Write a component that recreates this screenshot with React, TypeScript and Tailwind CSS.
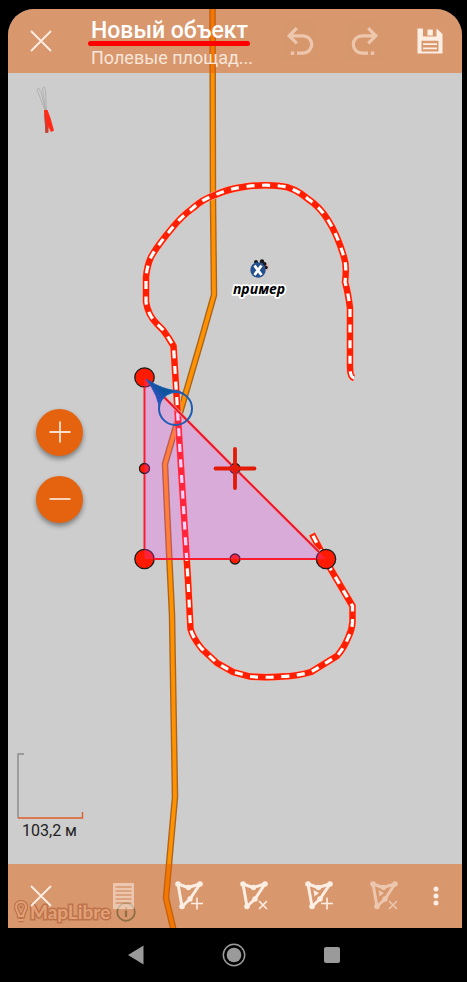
import { ReactNode } from "react";

const road = "212.5,0 213,200 214,295 201,341 165,464 167.5,520 172,615 175,797 166,898 175,936";

const track =
  "M354 378 Q350 377 350 367 L350 308 Q348 292 345 282 Q347 266 344 257 Q337 234 328 220 Q320 207 308 199 Q294 187 280 186 Q262 184 243 187 Q228 189 215 195 Q203 199 193 208 Q182 216 173 227 Q157 246 151 257 Q147 266 146 277 L146 302 Q148 315 157 324 Q164 330 168 337 L173.500 346 L188 580 L190.500 629 Q193 638 202 649 L217 663 L233 672 L250 676.500 Q266 678 282 676.500 Q298 676 311 672 L337 656 Q344 648 348 638 Q352 630 352.500 622 L352.500 606 L330 568 L312 534";

type IconButtonProps = {
  label: string;
  faded?: boolean;
  className?: string;
  children: ReactNode;
};

const IconButton = ({ label, faded, className = "w-[65px]", children }: IconButtonProps) => (
  <button
    aria-label={label}
    className={`flex h-full shrink-0 items-center justify-center text-[#fdeee4] ${className} ${
      faded ? "opacity-55" : ""
    }`}
  >
    {children}
  </button>
);

const CloseIcon = () => (
  <svg width="22" height="22" viewBox="0 0 22 22" stroke="currentColor" strokeWidth="1.8">
    <path d="M1 1L21 21M21 1L1 21" />
  </svg>
);

const UndoIcon = ({ flip }: { flip?: boolean }) => (
  <svg
    width="30"
    height="30"
    viewBox="0 0 30 30"
    fill="none"
    stroke="currentColor"
    strokeWidth="3.2"
    className={flip ? "-scale-x-100" : ""}
  >
    <path d="M11.800 2.200L4.200 9.800L11.800 17.400M4.200 9.800H18A8.700 8.700 0 0 1 18 27.200H12" />
    <path d="M5.800 27.200H9.200" strokeWidth="3.4" />
  </svg>
);

const SaveIcon = () => (
  <svg width="26" height="26" viewBox="0 0 26 26">
    <path
      fill="currentColor"
      fillRule="evenodd"
      d="M.5 .5H6V8.500H19.500V.5L25.500 6V25.500H.5ZM4.500 12.800V23.500H21.500V12.800Z"
    />
    <path fill="currentColor" d="M10.500 1.500H15.800V7.500H10.500ZM6 15.300H20V16.900H6ZM6 19.600H20V21.200H6Z" />
  </svg>
);

const ListIcon = () => (
  <svg width="21" height="26" viewBox="0 0 21 26">
    <path fill="currentColor" d="M0 0H21V26H0Z" />
    <path stroke="#d8976d" strokeWidth="1.4" d="M2.500 4H18.500M2.500 8H18.500M2.500 12H18.500M2.500 16H18.500M2.500 20H18.500" />
  </svg>
);

const NodeIcon = ({ mark, part }: { mark: "plus" | "cross"; part?: boolean }) => (
  <svg width="30" height="30" viewBox="0 0 30 30" fill="none" stroke="currentColor">
    <path d="M4 3L14 6.500L26 3L16 18L8 25.500Z" strokeWidth="3" strokeLinejoin="round" />
    <g fill="currentColor" stroke="none">
      <circle cx="4" cy="3" r="2.8" />
      <circle cx="26" cy="3" r="2.8" />
      <circle cx="8" cy="25.5" r="2.8" />
      <circle cx="14.500" cy="6.500" r="2.700" />
      <circle cx="16" cy="18" r="2.700" />
      {part && <path d="M9.500 9L15 12L10.500 15.500Z" />}
    </g>
    <path
      strokeWidth="1.6"
      d={mark === "plus" ? "M17 22.500H29M23 16.500V28.500" : "M20 20L28 28M28 20L20 28"}
    />
  </svg>
);

const MapCanvas = () => (
  <svg
    className="absolute inset-0 h-full w-full"
    viewBox="8 9 454 919"
    preserveAspectRatio="xMidYMid slice"
    fill="none"
  >
    <defs>
      <linearGradient id="pointer" x1="150" y1="405" x2="172" y2="385" gradientUnits="userSpaceOnUse">
        <stop offset="0.35" stopColor="#2f4fbe" />
        <stop offset="0.65" stopColor="#0c5599" />
      </linearGradient>
    </defs>

    {/* road */}
    <polyline points={road} stroke="#a9641f" strokeWidth="6.5" />
    <polyline points={road} stroke="#ff9200" strokeWidth="3.8" />

    {/* track */}
    <path d={track} stroke="#f5b5a8" strokeWidth="7.4" />
    <path d={track} stroke="#ff1e00" strokeWidth="6.4" />
    <path d={track} stroke="#fff" strokeWidth="3.2" strokeDasharray="8 7.6" />

    {/* edited polygon */}
    <g fill="#ff1a00" stroke="#1c1c1c" strokeWidth="1.3">
      <circle cx="144.500" cy="377.500" r="9.700" />
      <circle cx="144.500" cy="559" r="9.700" />
      <circle cx="326" cy="559" r="9.700" />
      <circle cx="144.500" cy="468.500" r="5" />
      <circle cx="235" cy="559" r="5" />
      <circle cx="235" cy="468.500" r="5" />
    </g>
    <path d="M144.500 377.500V559H326Z" fill="#ff3eff" fillOpacity="0.23" />
    <path d="M144.500 387V463M144.500 474V549M154 559H230M240 559H316" stroke="#fa1c30" strokeWidth="2" />
    <path d="M151 384L231 464.500M239 472.500L319 552" stroke="#f5a79c" strokeWidth="3.2" />
    <path d="M151 384L231 464.500M239 472.500L319 552" stroke="#ea1530" strokeWidth="2" />
    <path d="M235 449V488M215.500 468.500H254.500" stroke="#e31a08" strokeWidth="3.8" strokeLinecap="round" />

    {/* current position */}
    <circle cx="175.500" cy="408.500" r="16.500" stroke="#1e5cb3" strokeWidth="2" />
    <path
      d="M146 379C154 384 163 389 175 390.500Q181 391 184 394A16.500 16.500 0 0 0 159.500 411Q159 396 146 379Z"
      fill="url(#pointer)"
      stroke="#1e5cb3"
      strokeLinejoin="round"
    />

    {/* sample point */}
    <g>
      <circle cx="265" cy="267" r="4" fill="#e5b8b5" />
      <g fill="#16161c">
        <circle cx="256" cy="262" r="2" />
        <circle cx="262" cy="261.500" r="2.200" />
        <circle cx="264.500" cy="264" r="2" />
        <circle cx="266" cy="267.500" r="1.800" />
      </g>
      <circle cx="258" cy="270" r="7.700" fill="#24508f" />
      <path d="M254.500 265.500L261.500 275M261.500 265.500L254.500 275" stroke="#fff" strokeWidth="2.8" />
      <text
        x="259"
        y="294"
        textAnchor="middle"
        fill="#000"
        stroke="#fff"
        strokeWidth="3.5"
        strokeLinejoin="round"
        className="font-['Open_Sans',sans-serif] text-[14px] font-bold italic [paint-order:stroke]"
      >
        пример
      </text>
    </g>
  </svg>
);

const Attribution = () => (
  <div className="absolute bottom-1 left-1.5 flex items-center">
    <svg width="14" height="24" viewBox="0 0 14 24" fill="none">
      <path
        d="M7 2A5 5 0 0 1 12 7C12 10.500 9 12 9 16H5C5 12 2 10.500 2 7A5 5 0 0 1 7 2ZM4.500 20H9.500"
        stroke="#9c878a"
        strokeWidth="4.4"
      />
      <path
        d="M7 2A5 5 0 0 1 12 7C12 10.500 9 12 9 16H5C5 12 2 10.500 2 7A5 5 0 0 1 7 2ZM4.500 20H9.500"
        stroke="#dfdedf"
        strokeWidth="2"
      />
      <circle cx="7" cy="7" r="1.500" fill="#9c878a" />
    </svg>
    <a
      href="#maplibre"
      className="ml-0.5 font-['Lato',sans-serif] text-[19px] leading-6 font-bold text-[#dfdedf] [-webkit-text-stroke:3px_#9c878a] [paint-order:stroke]"
    >
      MapLibre
    </a>
    <button aria-label="О карте" className="ml-1.5">
      <svg width="20" height="20" viewBox="0 0 20 20" fill="none" stroke="#3f7f80" strokeWidth="1.8">
        <circle cx="10" cy="10" r="8.800" />
        <path d="M10 8.500V15M10 5V7" strokeWidth="2.200" />
      </svg>
    </button>
  </div>
);

const App = () => {
  return (
    <div className="flex min-h-screen flex-col bg-black font-['Roboto',sans-serif]">
      <div className="flex flex-1 flex-col pt-[9px] pr-[5px] pl-2">
        <div className="relative flex flex-1 flex-col overflow-hidden rounded-t-[26px] bg-[#cdcdcd]">
          <MapCanvas />
          <Attribution />

          <header className="relative flex h-16 items-center bg-[#e35c05]/48">
            <IconButton label="Закрыть">
              <CloseIcon />
            </IconButton>
            <div className="min-w-0 flex-1 pt-2 pl-[18px]">
              <h1 className="text-[23px] leading-5 font-medium whitespace-nowrap text-white">
                Новый объект
              </h1>
              <div className="-ml-[3px] h-[5px] w-[162px] rounded-full bg-[#ff0000]" />
              <p className="text-[18px] leading-6 whitespace-nowrap text-[#f8e6da]">
                Полевые площад...
              </p>
            </div>
            <IconButton label="Отменить" faded>
              <UndoIcon />
            </IconButton>
            <IconButton label="Повторить" faded>
              <UndoIcon flip />
            </IconButton>
            <IconButton label="Сохранить">
              <SaveIcon />
            </IconButton>
          </header>

          <main className="relative flex flex-1 flex-col items-start justify-between pt-[13px] pb-[21px]">
            <div className="ml-7 h-[92px]">
              <svg width="18" height="50" viewBox="36 86 18 50" fill="none">
                <path d="M45 110L37 90L38.500 88L41 92L45.500 110L42.500 88L44 87L45.500 90L46.500 110" stroke="#a9a9a9" strokeWidth="0.8" />
                <path d="M44 110L47.500 110L50.500 118L54 130.500L51 132L48.500 127V132.500L45.500 133Z" fill="#ff2a17" />
                <path d="M44 110L46.500 125L48 132.500L45.500 133Z" fill="#b04a42" />
              </svg>
            </div>

            <div className="ml-7 flex flex-col gap-5">
              <button
                aria-label="Приблизить"
                className="flex size-[47px] items-center justify-center rounded-full bg-[#e5630f] shadow-[0_3px_5px_rgba(0,0,0,0.4)]"
              >
                <svg width="22" height="22" viewBox="0 0 22 22" stroke="#fde0cc" strokeWidth="1.8">
                  <path d="M11 .5V21.500M.5 11H21.500" />
                </svg>
              </button>
              <button
                aria-label="Отдалить"
                className="flex size-[47px] items-center justify-center rounded-full bg-[#e5630f] shadow-[0_3px_5px_rgba(0,0,0,0.4)]"
              >
                <svg width="22" height="22" viewBox="0 0 22 22" stroke="#fde0cc" strokeWidth="1.8">
                  <path d="M.5 11H21.500" />
                </svg>
              </button>
            </div>

            <div className="ml-[9px]">
              <svg width="67" height="66" viewBox="0 0 67 66" fill="none">
                <path d="M7 1H1V65" stroke="#8a8a8a" strokeWidth="1.4" />
                <path d="M1 65H65.500V59" stroke="#dd5f2c" strokeWidth="1.4" />
              </svg>
              <p className="pl-[5px] text-[16px] leading-6 text-[#222]">103,2 м</p>
            </div>
          </main>

          <footer className="relative flex h-16 items-center bg-[#e35c05]/48">
            <IconButton label="Закрыть">
              <CloseIcon />
            </IconButton>
            <div className="flex h-full flex-1 justify-end">
              <IconButton label="Атрибуты" faded>
                <ListIcon />
              </IconButton>
              <IconButton label="Добавить точку">
                <NodeIcon mark="plus" />
              </IconButton>
              <IconButton label="Удалить точку">
                <NodeIcon mark="cross" />
              </IconButton>
              <IconButton label="Добавить часть">
                <NodeIcon mark="plus" part />
              </IconButton>
              <IconButton label="Удалить часть" faded>
                <NodeIcon mark="cross" part />
              </IconButton>
            </div>
            <IconButton label="Ещё" className="mr-1.5 w-10">
              <svg width="6" height="20" viewBox="0 0 6 20" fill="currentColor">
                <circle cx="3" cy="3" r="2.500" />
                <circle cx="3" cy="10" r="2.500" />
                <circle cx="3" cy="17" r="2.500" />
              </svg>
            </IconButton>
          </footer>
        </div>
      </div>

      <nav className="flex h-[54px] items-center justify-center text-[#9a9a9a]">
        <button aria-label="Назад" className="flex w-[98px] justify-center">
          <svg width="18" height="20" viewBox="0 0 18 20" fill="currentColor">
            <path d="M1 10L16.500 .5V19.500Z" />
          </svg>
        </button>
        <button aria-label="Домой" className="flex w-[98px] justify-center">
          <svg width="24" height="24" viewBox="0 0 24 24">
            <circle cx="12" cy="12" r="10.700" fill="none" stroke="currentColor" strokeWidth="1.500" />
            <circle cx="12" cy="12" r="7.300" fill="currentColor" />
          </svg>
        </button>
        <button aria-label="Недавние" className="flex w-[98px] justify-center">
          <span className="size-4 rounded-xs bg-[#9a9a9a]" />
        </button>
      </nav>
    </div>
  );
};

export default App;
